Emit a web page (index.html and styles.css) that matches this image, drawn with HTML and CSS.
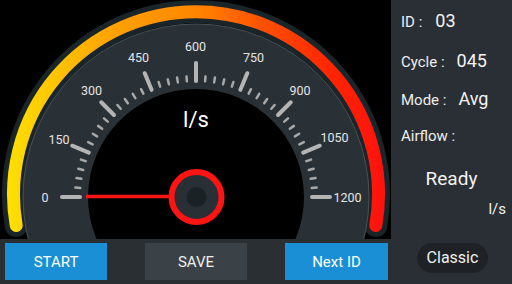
FILE: index.html
```html
<!DOCTYPE html>
<html>
<head>
<meta charset="utf-8">
<link rel="stylesheet" href="styles.css">
</head>
<body>
<div class="app">
  <div class="main">
    <div class="gauge-area">
      <svg class="gauge" width="391" height="239" viewBox="0 0 391 239">
        <defs>
          <linearGradient id="arcGrad" x1="0" y1="0" x2="391" y2="0" gradientUnits="userSpaceOnUse">
            <stop offset="0" stop-color="#ffe400"/>
            <stop offset="0.15" stop-color="#ffc200"/>
            <stop offset="0.3" stop-color="#ffa000"/>
            <stop offset="0.5" stop-color="#ff8600"/>
            <stop offset="0.68" stop-color="#ff4e00"/>
            <stop offset="0.85" stop-color="#ff2400"/>
            <stop offset="1" stop-color="#ff1010"/>
          </linearGradient>
        </defs>
        <path d="M 16.2 225.5 A 182.5 182.5 0 1 1 375.8 225.5" fill="none" stroke="#1a2529" stroke-width="23" stroke-linecap="round"/>
        <circle cx="196" cy="197" r="173" fill="#2a3136" stroke="#475156" stroke-width="1"/>
        <path d="M 16.2 225.5 A 182.5 182.5 0 1 1 375.8 225.5" fill="none" stroke="url(#arcGrad)" stroke-width="13" stroke-linecap="round"/>
        <circle cx="196" cy="197" r="108" fill="#000"/>
        <g stroke="#b4b4b4" stroke-width="4" stroke-linecap="round">
          <line x1="62" y1="197" x2="80" y2="197" transform="rotate(0 196 197)"/>
          <line x1="62" y1="197" x2="80" y2="197" transform="rotate(22.5 196 197)"/>
          <line x1="62" y1="197" x2="80" y2="197" transform="rotate(45 196 197)"/>
          <line x1="62" y1="197" x2="80" y2="197" transform="rotate(67.5 196 197)"/>
          <line x1="62" y1="197" x2="80" y2="197" transform="rotate(90 196 197)"/>
          <line x1="62" y1="197" x2="80" y2="197" transform="rotate(112.5 196 197)"/>
          <line x1="62" y1="197" x2="80" y2="197" transform="rotate(135 196 197)"/>
          <line x1="62" y1="197" x2="80" y2="197" transform="rotate(157.5 196 197)"/>
          <line x1="62" y1="197" x2="80" y2="197" transform="rotate(180 196 197)"/>
        </g>
        <g stroke="#a8a8a8" stroke-width="2.5" stroke-linecap="round">
          <line x1="75" y1="197" x2="80" y2="197" transform="rotate(4.5 196 197)"/>
          <line x1="75" y1="197" x2="80" y2="197" transform="rotate(9 196 197)"/>
          <line x1="75" y1="197" x2="80" y2="197" transform="rotate(13.5 196 197)"/>
          <line x1="75" y1="197" x2="80" y2="197" transform="rotate(18 196 197)"/>
          <line x1="75" y1="197" x2="80" y2="197" transform="rotate(27 196 197)"/>
          <line x1="75" y1="197" x2="80" y2="197" transform="rotate(31.5 196 197)"/>
          <line x1="75" y1="197" x2="80" y2="197" transform="rotate(36 196 197)"/>
          <line x1="75" y1="197" x2="80" y2="197" transform="rotate(40.5 196 197)"/>
          <line x1="75" y1="197" x2="80" y2="197" transform="rotate(49.5 196 197)"/>
          <line x1="75" y1="197" x2="80" y2="197" transform="rotate(54 196 197)"/>
          <line x1="75" y1="197" x2="80" y2="197" transform="rotate(58.5 196 197)"/>
          <line x1="75" y1="197" x2="80" y2="197" transform="rotate(63 196 197)"/>
          <line x1="75" y1="197" x2="80" y2="197" transform="rotate(72 196 197)"/>
          <line x1="75" y1="197" x2="80" y2="197" transform="rotate(76.5 196 197)"/>
          <line x1="75" y1="197" x2="80" y2="197" transform="rotate(81 196 197)"/>
          <line x1="75" y1="197" x2="80" y2="197" transform="rotate(85.5 196 197)"/>
          <line x1="75" y1="197" x2="80" y2="197" transform="rotate(94.5 196 197)"/>
          <line x1="75" y1="197" x2="80" y2="197" transform="rotate(99 196 197)"/>
          <line x1="75" y1="197" x2="80" y2="197" transform="rotate(103.5 196 197)"/>
          <line x1="75" y1="197" x2="80" y2="197" transform="rotate(108 196 197)"/>
          <line x1="75" y1="197" x2="80" y2="197" transform="rotate(117 196 197)"/>
          <line x1="75" y1="197" x2="80" y2="197" transform="rotate(121.5 196 197)"/>
          <line x1="75" y1="197" x2="80" y2="197" transform="rotate(126 196 197)"/>
          <line x1="75" y1="197" x2="80" y2="197" transform="rotate(130.5 196 197)"/>
          <line x1="75" y1="197" x2="80" y2="197" transform="rotate(139.5 196 197)"/>
          <line x1="75" y1="197" x2="80" y2="197" transform="rotate(144 196 197)"/>
          <line x1="75" y1="197" x2="80" y2="197" transform="rotate(148.5 196 197)"/>
          <line x1="75" y1="197" x2="80" y2="197" transform="rotate(153 196 197)"/>
          <line x1="75" y1="197" x2="80" y2="197" transform="rotate(162 196 197)"/>
          <line x1="75" y1="197" x2="80" y2="197" transform="rotate(166.5 196 197)"/>
          <line x1="75" y1="197" x2="80" y2="197" transform="rotate(171 196 197)"/>
          <line x1="75" y1="197" x2="80" y2="197" transform="rotate(175.5 196 197)"/>
        </g>
        <g class="scale">
          <text x="45" y="197">0</text>
          <text x="59" y="139">150</text>
          <text x="91.5" y="90.5">300</text>
          <text x="138.5" y="57.5">450</text>
          <text x="195.5" y="46.5">600</text>
          <text x="253.5" y="57.5">750</text>
          <text x="300" y="90.5">900</text>
          <text x="334.5" y="137.5">1050</text>
          <text x="347.5" y="197">1200</text>
        </g>
        <text class="unit" x="196" y="127">l/s</text>
        <line x1="86" y1="196.5" x2="172" y2="196.5" stroke="#ff1414" stroke-width="3.5"/>
        <circle cx="196.5" cy="197" r="25" fill="#283036" stroke="#ff1414" stroke-width="6"/>
        <circle cx="196.5" cy="197" r="10" fill="#1b2226"/>
      </svg>
    </div>
    <div class="bar">
      <div class="btn btn-blue">START</div>
      <div class="btn btn-gray">SAVE</div>
      <div class="btn btn-blue btn-wide">Next ID</div>
    </div>
  </div>
  <aside class="side">
    <div class="row row-id"><span class="lbl">ID :</span><span class="val val-id">03</span></div>
    <div class="row row-cycle"><span class="lbl">Cycle :</span><span class="val">045</span></div>
    <div class="row row-mode"><span class="lbl">Mode :</span><span class="val">Avg</span></div>
    <div class="row row-air"><span class="lbl">Airflow :</span></div>
    <div class="ready">Ready</div>
    <div class="flow-unit">l/s</div>
    <div class="pill">Classic</div>
  </aside>
</div>
</body>
</html>
```
FILE: styles.css
```css
html, body {
  margin: 0;
  padding: 0;
  background: #000;
}
body {
  width: 512px;
  height: 284px;
  overflow: hidden;
  font-family: Roboto, "Noto Sans", "Liberation Sans", sans-serif;
  color: #f2f2f2;
}
.app {
  display: flex;
  width: 512px;
  height: 284px;
}
.main {
  width: 391px;
  display: flex;
  flex-direction: column;
}
.gauge-area {
  height: 239px;
  background: #000;
}
.gauge {
  display: block;
}
.scale text {
  font-family: Roboto, "Noto Sans", sans-serif;
  font-size: 12.5px;
  fill: #e4e4e4;
  text-anchor: middle;
  dominant-baseline: central;
}
.unit {
  font-family: Roboto, "Noto Sans", sans-serif;
  font-size: 22px;
  fill: #ffffff;
  text-anchor: middle;
}
.bar {
  height: 45px;
  background: #2a2f34;
  display: flex;
  align-items: flex-start;
  padding: 4px 0 0 5px;
  gap: 38px;
  box-sizing: border-box;
}
.btn {
  width: 102px;
  height: 37px;
  display: flex;
  align-items: center;
  justify-content: center;
  font-size: 15px;
  color: #ffffff;
}
.btn-wide {
  width: 103px;
}
.btn-blue {
  background: #1b8fd6;
}
.btn-gray {
  background: #3b4247;
  color: #eeeeee;
}
.side {
  width: 121px;
  height: 284px;
  background: #2a2f35;
  display: flex;
  flex-direction: column;
  padding: 11px 0 0 10px;
  box-sizing: border-box;
}
.row {
  display: flex;
  align-items: baseline;
  line-height: 20px;
  height: 20px;
}
.row-id { margin-bottom: 20px; }
.row-cycle { margin-bottom: 18px; }
.row-mode { margin-bottom: 17px; }
.lbl {
  font-size: 15px;
  color: #eeeeee;
}
.val {
  font-size: 18px;
  margin-left: 12px;
  color: #f4f4f4;
}
.val-id {
  margin-left: 13px;
}
.ready {
  margin-top: 22px;
  font-size: 19px;
  line-height: 22px;
  text-align: center;
  margin-left: -10px;
}
.flow-unit {
  margin-top: 10px;
  font-size: 15px;
  line-height: 18px;
  text-align: right;
  padding-right: 6px;
}
.pill {
  margin-top: 25px;
  align-self: flex-start;
  margin-left: 16px;
  width: 71px;
  height: 30px;
  border-radius: 15px;
  background: #1e2226;
  font-size: 16px;
  line-height: 30px;
  text-align: center;
  color: #f0f0f0;
}
```
